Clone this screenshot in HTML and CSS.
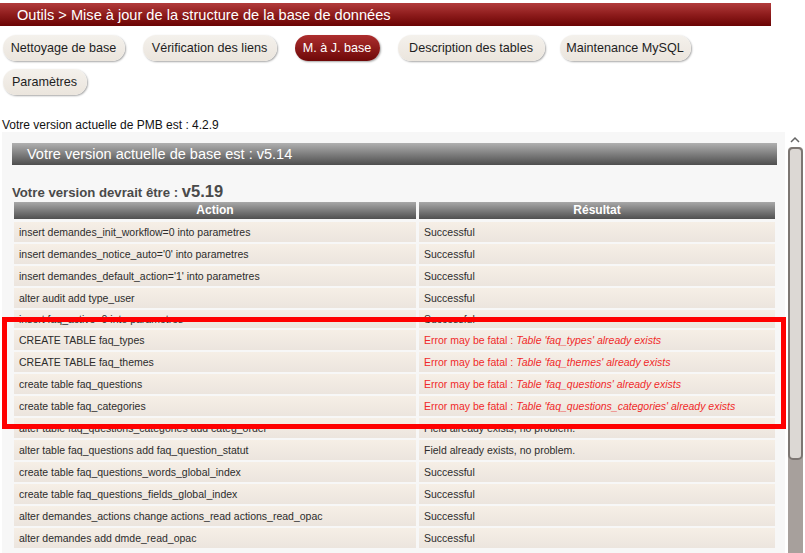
FILE: index.html
```html
<!DOCTYPE html>
<html lang="fr">
<head>
<meta charset="utf-8">
<title>Mise à jour de la base</title>
<link rel="stylesheet" href="styles.css">
</head>
<body>
<div class="titlebar">Outils &gt; Mise à jour de la structure de la base de données</div>
<div class="tabs">
  <span class="tab t-clean">Nettoyage de base</span>
  <span class="tab t-links">Vérification des liens</span>
  <span class="tab t-maj active">M. à J. base</span>
  <span class="tab t-desc">Description des tables</span>
  <span class="tab t-mysql">Maintenance MySQL</span>
  <span class="tab t-param">Paramètres</span>
</div>
<div class="pmbver">Votre version actuelle de PMB est : 4.2.9</div>
<div class="viewport">
  <div class="frame">
    <div class="basebar">Votre version actuelle de base est : v5.14</div>
    <div class="should">Votre version devrait être : <span class="big">v5.19</span></div>
    <div class="grid">
      <div class="th">Action</div><div class="th">Résultat</div>
      <div class="td">insert demandes_init_workflow=0 into parametres</div><div class="td">Successful</div>
      <div class="td">insert demandes_notice_auto='0' into parametres</div><div class="td">Successful</div>
      <div class="td">insert demandes_default_action='1' into parametres</div><div class="td">Successful</div>
      <div class="td">alter audit add type_user</div><div class="td">Successful</div>
      <div class="td cut">insert faq_active=0 into parametres</div><div class="td cut">Successful</div>
      <div class="td">CREATE TABLE faq_types</div><div class="td err">Error may be fatal : <i>Table 'faq_types' already exists</i></div>
      <div class="td">CREATE TABLE faq_themes</div><div class="td err">Error may be fatal : <i>Table 'faq_themes' already exists</i></div>
      <div class="td">create table faq_questions</div><div class="td err">Error may be fatal : <i>Table 'faq_questions' already exists</i></div>
      <div class="td">create table faq_categories</div><div class="td err">Error may be fatal : <i>Table 'faq_questions_categories' already exists</i></div>
      <div class="td">alter table faq_questions_categories add categ_order</div><div class="td">Field already exists, no problem.</div>
      <div class="td">alter table faq_questions add faq_question_statut</div><div class="td">Field already exists, no problem.</div>
      <div class="td">create table faq_questions_words_global_index</div><div class="td">Successful</div>
      <div class="td">create table faq_questions_fields_global_index</div><div class="td">Successful</div>
      <div class="td">alter demandes_actions change actions_read actions_read_opac</div><div class="td">Successful</div>
      <div class="td">alter demandes add dmde_read_opac</div><div class="td">Successful</div>
    </div>
  </div>
  <div class="scrollbar">
    <svg class="arrow" width="12" height="8" viewBox="0 0 12 8"><path d="M2 6 L6 2 L10 6" fill="none" stroke="#666" stroke-width="1.5"/></svg>
    <div class="track"><div class="thumb"></div></div>
  </div>
</div>
<div class="highlight"></div>
</body>
</html>
```
FILE: styles.css
```css
html, body {
  margin: 0;
  padding: 0;
  background: #fff;
  font-family: "Liberation Sans", Arial, sans-serif;
  overflow: hidden;
}
body {
  width: 805px;
  height: 553px;
  position: relative;
}
.titlebar {
  margin-top: 3px;
  width: 771px;
  height: 23px;
  box-sizing: border-box;
  padding-left: 17px;
  line-height: 24px;
  font-size: 14.6px;
  color: #fff;
  background: linear-gradient(#b23c3c, #8e1c1c 50%, #6a0404);
}
.tabs {
  display: flex;
  flex-wrap: wrap;
  width: 740px;
  padding: 9px 0 0 3px;
  column-gap: 18px;
  row-gap: 8px;
}
.tab {
  height: 26px;
  line-height: 26px;
  box-sizing: border-box;
  text-align: center;
  padding: 0 1px 0 0;
  border-radius: 13px;
  font-size: 12.6px;
  color: #1e1e1e;
  white-space: nowrap;
  background: linear-gradient(#f4f1ec, #ebe5dd);
  box-shadow: 1px 1px 2px rgba(0, 0, 0, 0.35);
}
.t-clean { width: 122px; }
.t-links { width: 134px; }
.t-maj { width: 85px; }
.t-desc { width: 147px; }
.t-mysql { width: 131px; margin-left: -3px; }
.t-param { width: 84px; }
.tab.active {
  color: #fff;
  background: linear-gradient(#ad2e2e, #6e0808);
}
.pmbver {
  margin-top: 23px;
  padding-left: 2px;
  font-size: 12px;
  line-height: 14px;
  color: #111;
}
.viewport {
  display: flex;
  height: 421px;
  overflow: hidden;
}
.frame {
  margin-left: 2px;
  width: 783px;
  height: 421px;
  background: #f7f7f7;
  box-sizing: border-box;
  padding: 11px 8px 0 10px;
  overflow: hidden;
}
.basebar {
  height: 22px;
  line-height: 22px;
  padding-left: 15px;
  font-size: 14.5px;
  color: #fff;
  background: linear-gradient(#b0b0b0, #4e4e4e);
}
.should {
  margin-top: 16px;
  height: 21px;
  line-height: 21px;
  font-size: 13.2px;
  font-weight: bold;
  color: #4a4a4a;
}
.should .big {
  font-size: 16.5px;
}
.grid {
  display: grid;
  grid-template-columns: 402px 356px;
  column-gap: 3px;
  row-gap: 2px;
  margin-left: 2px;
}
.th {
  height: 17px;
  line-height: 17px;
  text-align: center;
  font-size: 12px;
  font-weight: bold;
  color: #fff;
  background: linear-gradient(#a8a8a8, #505050);
  margin-bottom: 1px;
}
.td {
  height: 20px;
  line-height: 20px;
  padding-left: 5px;
  font-size: 10.5px;
  color: #2c2c2c;
  white-space: nowrap;
  overflow: hidden;
  background: linear-gradient(#f6efe6, #ece5de);
}
.td.cut {
  height: 18px;
  line-height: 18px;
}
.td.err {
  color: #f02a2a;
}
.scrollbar {
  margin-left: 2px;
  width: 16px;
  display: flex;
  flex-direction: column;
  align-items: center;
}
.arrow {
  margin-top: 4px;
  margin-bottom: 3px;
}
.track {
  width: 15px;
  flex: 1;
  background: #a7a09c;
  border-radius: 4px 4px 0 0;
}
.thumb {
  height: 313px;
  box-sizing: border-box;
  background: #dcd8d4;
  border: 2px solid #7c7672;
  border-radius: 5px;
}
.highlight {
  position: absolute;
  left: 2px;
  top: 317px;
  width: 784px;
  height: 112px;
  box-sizing: border-box;
  border: 5px solid #ff0000;
}
```
